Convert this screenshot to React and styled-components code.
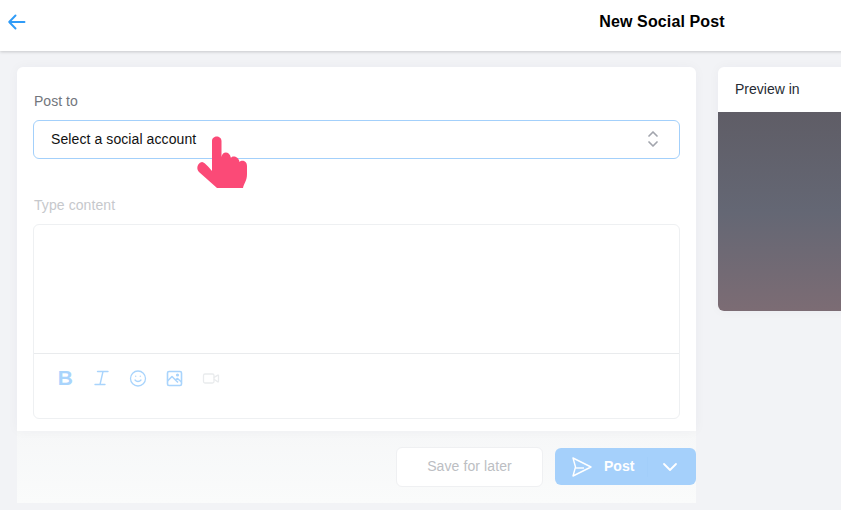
import React from "react";
import styled, { createGlobalStyle } from "styled-components";
import { ChevronDown, Smile, Video } from "lucide-react";

const GlobalStyle = createGlobalStyle`
  html, body {
    margin: 0;
    height: 100%;
    overflow: hidden;
    background: #f2f3f6;
    font-family: "Liberation Sans", Arial, sans-serif;
  }
`;

const Page = styled.div`
  width: 1324px;
  height: 510px;
  background: #f2f3f6;
`;

const Header = styled.header`
  height: 51px;
  display: grid;
  grid-template-columns: 1fr auto 1fr;
  align-items: center;
  padding: 0 8px;
  background: #fff;
  box-shadow: 0 1px 3px rgba(0, 0, 0, 0.18);
`;

const BackButton = styled.div`
  display: flex;
  align-items: center;
  color: #2f9bf7;
  margin-top: -7px;
`;

const Title = styled.h1`
  margin: -7px 0 0;
  font-size: 16px;
  font-weight: 700;
  letter-spacing: 0.12px;
  color: #000;
`;

const Main = styled.main`
  display: flex;
  align-items: flex-start;
  gap: 22px;
  padding: 16px 17px 0;
`;

const Column = styled.div`
  width: 679px;
  flex: none;
`;

const Card = styled.section`
  position: relative;
  height: 364px;
  box-sizing: border-box;
  padding: 26px 16px 12px;
  background: #fff;
  border-radius: 6px 6px 0 0;
  box-shadow: 0 0 12px rgba(30, 40, 70, 0.04);
`;

const Label = styled.div`
  font-size: 14px;
  line-height: 16px;
  padding-left: 1px;
  letter-spacing: ${(p) => (p.$muted ? "0.08px" : "0.03px")};
  color: ${(p) => (p.$muted ? "#c6c8cc" : "#72767c")};
  margin-bottom: 11px;
`;

const Select = styled.div`
  height: 39px;
  box-sizing: border-box;
  display: flex;
  align-items: center;
  justify-content: space-between;
  padding: 0 20px 2px 17px;
  border: 1px solid #a3d0fb;
  border-radius: 6px;
  font-size: 14px;
  letter-spacing: 0.09px;
  color: #111;
  margin-bottom: 38px;
`;

const Editor = styled.div`
  height: 195px;
  box-sizing: border-box;
  border: 1px solid #eef0f2;
  border-radius: 6px;
  display: flex;
  flex-direction: column;
`;

const TextArea = styled.div`
  height: 128px;
  flex: none;
  border-bottom: 1px solid #e9ebed;
`;

const Toolbar = styled.div`
  display: flex;
  align-items: center;
  gap: 18.5px;
  padding: 14px 0 0 22px;
  height: 20px;
`;

const ToolIcon = styled.span`
  width: 18px;
  height: 18px;
  display: flex;
  align-items: center;
  justify-content: center;
  color: ${(p) => (p.$off ? "#e9ebed" : "#a9d4fc")};
`;

const BoldIcon = styled.span`
  font-size: 20px;
  font-weight: 700;
  line-height: 18px;
  transform: scaleX(1.05);
`;

const Pointer = styled.svg`
  position: absolute;
  left: 179px;
  top: 69px;
`;

const Footer = styled.footer`
  height: 72px;
  box-sizing: border-box;
  padding-top: 16px;
  display: flex;
  justify-content: flex-end;
  align-items: flex-start;
  gap: 12px;
  background: linear-gradient(#f6f7f8, #fafbfb);
`;

const SaveButton = styled.div`
  width: 147px;
  height: 40px;
  box-sizing: border-box;
  display: flex;
  align-items: center;
  justify-content: center;
  padding-bottom: 2px;
  background: #fff;
  border: 1px solid #eff0f2;
  border-radius: 6px;
  font-size: 14px;
  letter-spacing: 0.1px;
  color: #bcbec3;
`;

const PostButton = styled.div`
  width: 141px;
  height: 37px;
  margin-top: 1px;
  display: flex;
  align-items: center;
  padding-left: 16px;
  box-sizing: border-box;
  background: #a5d0fb;
  border-radius: 6px;
  color: #fff;
  font-size: 14px;
  font-weight: 700;
`;

const PostLabel = styled.span`
  margin: -1px 0 0 11px;
  width: 43px;
`;

const Divider = styled.span`
  width: 1px;
  height: 20px;
  background: #a2cefa;
  margin-right: 10px;
`;

const Preview = styled.aside`
  width: 300px;
  height: 244px;
  flex: none;
  display: flex;
  flex-direction: column;
  background: #fff;
  border-radius: 6px;
  overflow: hidden;
  box-shadow: 0 0 12px rgba(30, 40, 70, 0.04);
`;

const PreviewHead = styled.div`
  height: 45px;
  flex: none;
  display: flex;
  align-items: center;
  padding: 0 17px 2px;
  box-sizing: border-box;
  font-size: 14px;
  color: #262b33;
`;

const PreviewImage = styled.div`
  flex: 1;
  background: linear-gradient(#5f5d66 0%, #646774 50%, #7c6c74 100%);
`;

const BackArrow = () => (
  <svg width="18" height="16" viewBox="0 0 18 16" fill="none" stroke="currentColor" strokeWidth="1.9" strokeLinecap="round" strokeLinejoin="round">
    <path d="M1.2 8 H16.5 M7.5 1.5 L1.2 8 L7.5 14.5" />
  </svg>
);

const StepperIcon = () => (
  <svg width="12" height="18" viewBox="0 0 12 18" fill="none" stroke="#a2a5ad" strokeWidth="1.7" strokeLinecap="round" strokeLinejoin="round">
    <path d="M2 6 L6 2 L10 6 M2 12 L6 16 L10 12" />
  </svg>
);

const ItalicIcon = () => (
  <svg width="15" height="16" viewBox="0 0 15 16" fill="none" stroke="currentColor" strokeWidth="1.4" strokeLinecap="round">
    <path d="M3.5 1.5 H14 M1 14.5 H11 M9 1.5 L6 14.5" />
  </svg>
);

const SendIcon = () => (
  <svg width="22" height="22" viewBox="0 0 22 22" fill="none" stroke="currentColor" strokeWidth="1.4" strokeLinejoin="round">
    <path d="M2 2 L20 11 L2 20 L4.5 11 Z" />
    <path d="M4.5 12 L13 12" />
  </svg>
);

const ImageIcon = () => (
  <svg width="17" height="17" viewBox="0 0 17 17" fill="none" stroke="currentColor" strokeWidth="1.6" strokeLinejoin="round">
    <rect x="1.5" y="1.5" width="14" height="14" rx="1.5" />
    <path d="M1.5 11 L6 6.5 L12 12.5 M9.5 10 L11.5 8.5 L15.5 12" />
    <circle cx="11.5" cy="5" r="0.8" />
  </svg>
);

const Hand = () => (
  <Pointer width="52" height="54" viewBox="0 0 52 54">
    <path
      fill="#fb4a77"
      d="M16 5 C16 -1 25.5 -1 25.5 5 L25.5 21 C26.5 15 33.5 15 35 22 C36 19.5 42.5 20 43.5 26 C45 24 51 24 51 30 L51 38 C51 45 48 47 47 52 L21 52 L3 36 C0 33 1 27 6 26 C8 26 12 30 16 35 Z"
    />
  </Pointer>
);

export default function App() {
  return (
    <Page>
      <GlobalStyle />
      <Header>
        <BackButton>
          <BackArrow />
        </BackButton>
        <Title>New Social Post</Title>
        <span />
      </Header>
      <Main>
        <Column>
          <Card>
            <Label>Post to</Label>
            <Select>
              Select a social account
              <StepperIcon />
            </Select>
            <Label $muted>Type content</Label>
            <Editor>
              <TextArea />
              <Toolbar>
                <ToolIcon><BoldIcon>B</BoldIcon></ToolIcon>
                <ToolIcon><ItalicIcon /></ToolIcon>
                <ToolIcon><Smile size={19} strokeWidth={1.7} /></ToolIcon>
                <ToolIcon><ImageIcon /></ToolIcon>
                <ToolIcon $off><Video size={21} strokeWidth={1.7} /></ToolIcon>
              </Toolbar>
            </Editor>
            <Hand />
          </Card>
          <Footer>
            <SaveButton>Save for later</SaveButton>
            <PostButton>
              <SendIcon />
              <PostLabel>Post</PostLabel>
              <Divider />
              <ChevronDown size={24} strokeWidth={1.8} />
            </PostButton>
          </Footer>
        </Column>
        <Preview>
          <PreviewHead>Preview in</PreviewHead>
          <PreviewImage />
        </Preview>
      </Main>
    </Page>
  );
}
